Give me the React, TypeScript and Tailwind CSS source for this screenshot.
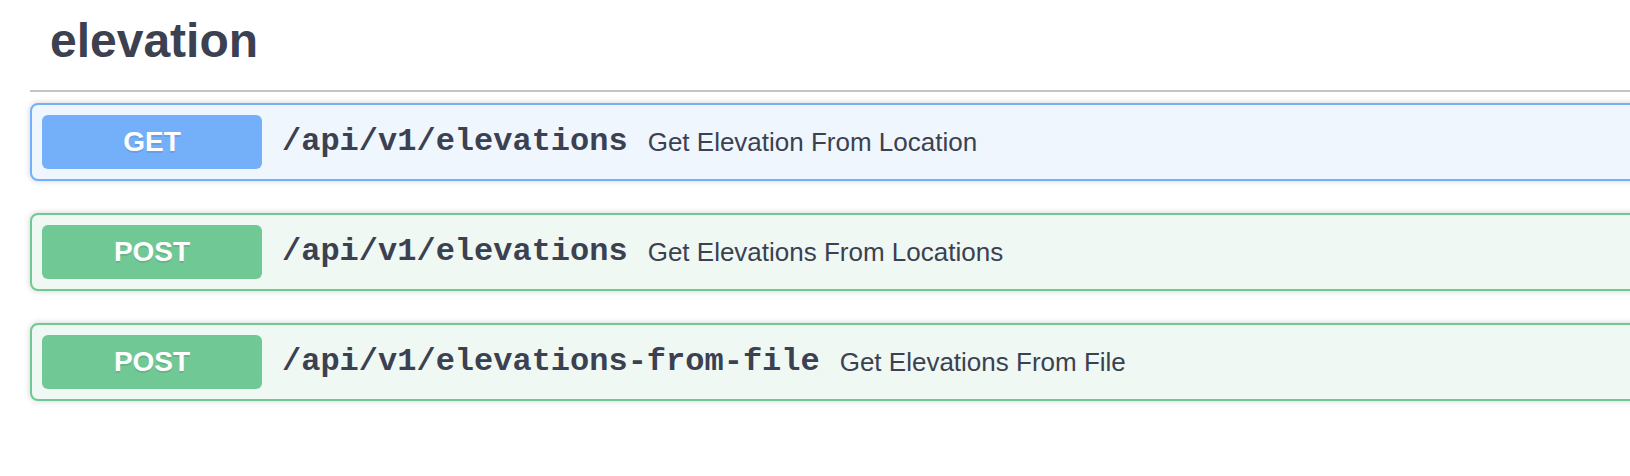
import React from "react";

type Op = { method: "GET" | "POST"; path: string; summary: string };

const ops: Op[] = [
  { method: "GET", path: "/api/v1/elevations", summary: "Get Elevation From Location" },
  { method: "POST", path: "/api/v1/elevations", summary: "Get Elevations From Locations" },
  { method: "POST", path: "/api/v1/elevations-from-file", summary: "Get Elevations From File" },
];

function Block({ op }: { op: Op }) {
  const isGet = op.method === "GET";
  return (
    <div
      className={
        "mb-[32px] flex h-[78px] items-center rounded-[8px] border-2 px-[10px] shadow-[0_0_6px_rgba(0,0,0,0.19)] " +
        (isGet ? "border-[#73b0f9] bg-[#eff6fe]" : "border-[#70c894] bg-[#eff8f3]")
      }
    >
      <div
        className={
          "flex h-[54px] w-[220px] shrink-0 items-center justify-center rounded-[6px] text-[28px] font-bold text-white [text-shadow:0_2px_0_rgba(0,0,0,0.1)] " +
          (isGet ? "bg-[#73b0f9]" : "bg-[#70c894]")
        }
        style={{ fontFamily: '"Liberation Sans", Arial, sans-serif' }}
      >
        {op.method}
      </div>
      <span
        className="px-[20px] text-[32px] font-bold text-[#3b4151]"
        style={{ fontFamily: '"Liberation Mono", "Courier New", monospace' }}
      >
        {op.path}
      </span>
      <span
        className="text-[26px] text-[#3b4151]"
        style={{ fontFamily: '"Liberation Sans", Arial, sans-serif' }}
      >
        {op.summary}
      </span>
    </div>
  );
}

export default function App() {
  return (
    <div className="h-[476px] w-[1630px] overflow-hidden bg-white">
      <div className="w-[1640px] pl-[30px]">
        <h3
          className="border-b-2 border-[#c4c4c6] pb-[21px] pl-[20px] pt-[13px] text-[48px] font-bold leading-[56px] text-[#3b4151]"
          style={{ fontFamily: '"Liberation Sans", Arial, sans-serif' }}
        >
          elevation
        </h3>
        <div className="mt-[11px]">
          {ops.map((op, i) => (
            <Block key={i} op={op} />
          ))}
        </div>
      </div>
    </div>
  );
}
